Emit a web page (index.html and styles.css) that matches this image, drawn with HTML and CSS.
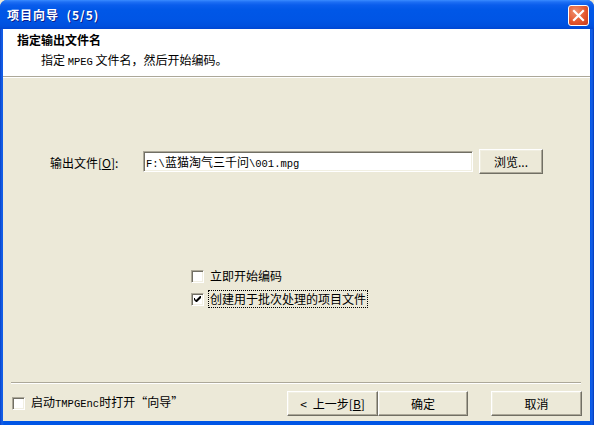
FILE: index.html
```html
<!DOCTYPE html>
<html lang="zh">
<head>
<meta charset="utf-8">
<title>项目向导</title>
<link rel="stylesheet" href="styles.css">
</head>
<body>
<div class="window">
  <div class="titlebar">
    <span class="title">项目向导&nbsp; (5/5)</span>
    <span class="close" aria-label="关闭">
      <svg width="21" height="21" viewBox="0 0 21 21">
        <path d="M6 6 L15 15 M15 6 L6 15" stroke="#fff" stroke-width="2.2" stroke-linecap="square"/>
      </svg>
    </span>
  </div>
  <div class="client">
    <div class="header">
      <div class="h-title">指定输出文件名</div>
      <div class="h-sub">指定 <span class="mono">MPEG</span> 文件名，然后开始编码。</div>
    </div>
    <div class="main">
      <div class="field-row">
        <label class="field-label">输出文件[<u>O</u>]:</label>
        <div class="input"><span class="mono">F:\</span>蓝猫淘气三千问<span class="mono">\001.mpg</span></div>
        <button class="btn browse">浏览...</button>
      </div>
      <div class="checks">
        <div class="check-row">
          <span class="box"></span>
          <span class="clabel">立即开始编码</span>
        </div>
        <div class="check-row">
          <span class="box"><svg width="7" height="7" viewBox="0 0 7 7"><path d="M0 2 L0 4 L2 6 L3 6 L7 2 L7 0 L6 0 L2 4 L1 3 L1 2 Z" fill="#000"/></svg></span>
          <span class="clabel focus">创建用于批次处理的项目文件</span>
        </div>
      </div>
    </div>
    <div class="sep"></div>
    <div class="footer">
      <div class="check-row">
        <span class="box"></span>
        <span class="clabel">启动<span class="mono">TMPGEnc</span>时打开“向导”</span>
      </div>
      <div class="buttons">
        <button class="btn back"><span class="lt">&lt;</span>上一步[<u>B</u>]</button>
        <button class="btn ok">确定</button>
        <button class="btn cancel">取消</button>
      </div>
    </div>
  </div>
</div>
</body>
</html>
```

FILE: styles.css
```css
* { box-sizing: border-box; }
html, body { margin: 0; padding: 0; }
body {
  width: 594px;
  height: 425px;
  overflow: hidden;
  background: #ECE9D8;
  font-family: "Noto Sans CJK SC", "Noto Sans", sans-serif;
  font-size: 12px;
  color: #000;
}
.mono { font-family: "Liberation Mono", monospace; font-size: 10.5px; }
.window {
  width: 594px;
  height: 425px;
  display: flex;
  flex-direction: column;
  background: linear-gradient(90deg, #0842C8 0, #1660E8 2px, #0055E5 4px, #0055E5 590px, #1660E8 592px, #0038B8 594px);
  border-radius: 7px 7px 0 0;
  padding: 0 4px 4px 3px;
}
.titlebar {
  height: 29px;
  margin: 0 -4px 0 -3px;
  padding: 0 6px 0 7px;
  display: flex;
  align-items: center;
  justify-content: space-between;
  border-radius: 7px 7px 0 0;
  background: linear-gradient(180deg, #3A8CFF 0, #1E6FF4 2px, #0A5DEC 5px, #0057E7 10px, #0055E5 20px, #0050DE 26px, #0046D2 29px);
}
.title {
  color: #fff;
  font-weight: bold;
  font-size: 12px;
  text-shadow: 1px 1px 0 #0A1E8C;
  letter-spacing: 1px;
}
.close {
  width: 21px;
  height: 21px;
  margin-right: -1px;
  border: 1px solid #fff;
  border-radius: 3px;
  background: radial-gradient(circle at 35% 30%, #F0916E 0, #E4572E 55%, #C8381A 100%);
  display: flex;
  align-items: center;
  justify-content: center;
  margin-top: 1px;
}
.close svg { display: block; margin: -1px; }
.client {
  flex: 1;
  background: #ECE9D8;
  display: flex;
  flex-direction: column;
}
.header {
  height: 48px;
  background: #fff;
  padding: 4px 0 0 14px;
  border-bottom: 1px solid #ACA899;
  box-shadow: 0 1px 0 #fff;
}
.h-title { font-weight: bold; line-height: 14px; }
.h-sub { line-height: 14px; margin-top: 6px; padding-left: 24px; }
.main {
  flex: 1;
  padding-top: 72px;
}
.field-row {
  display: flex;
  align-items: center;
  height: 25px;
}
.field-label {
  width: 93px;
  margin-left: 47px;
  padding-top: 1px;
}
.input {
  width: 330px;
  height: 21px;
  background: #fff;
  border-top: 1px solid #ACA899;
  border-left: 1px solid #ACA899;
  border-right: 1px solid #fff;
  border-bottom: 1px solid #fff;
  box-shadow: inset 1px 1px 0 #716F64, inset -1px -1px 0 #F1EFE2;
  padding: 0 2px;
  line-height: 19px;
  white-space: nowrap;
}
.btn {
  font-family: "Noto Sans CJK SC", "Noto Sans", sans-serif;
  font-size: 12px;
  color: #000;
  background: #ECE9D8;
  border-top: 1px solid #fff;
  border-left: 1px solid #fff;
  border-right: 1px solid #716F64;
  border-bottom: 1px solid #716F64;
  box-shadow: inset -1px -1px 0 #ACA899, inset 1px 1px 0 #F1EFE2;
  border-radius: 0;
  padding: 0;
  height: 25px;
}
.browse {
  width: 64px;
  margin-left: 6px;
  text-align: center;
}
.checks {
  margin-left: 188px;
  margin-top: 94px;
  display: flex;
  flex-direction: column;
  gap: 7px;
}
.check-row {
  display: flex;
  align-items: center;
  height: 16px;
}
.box {
  width: 13px;
  height: 13px;
  background: #fff;
  border-top: 1px solid #ACA899;
  border-left: 1px solid #ACA899;
  border-right: 1px solid #fff;
  border-bottom: 1px solid #fff;
  box-shadow: inset 1px 1px 0 #716F64, inset -1px -1px 0 #F1EFE2;
  display: flex;
  align-items: center;
  justify-content: center;
  flex: none;
}
.box svg { display: block; }
.clabel {
  margin-left: 4px;
  line-height: 14px;
  padding: 1px 1px;
  border: 1px solid transparent;
  white-space: nowrap;
}
.clabel.focus { border: 1px dotted #000; }
.sep {
  margin: 0 9px 0 8px;
  height: 2px;
  border-top: 1px solid #ACA899;
  border-bottom: 1px solid #fff;
}
.footer {
  display: flex;
  align-items: center;
  justify-content: space-between;
  padding: 6px 8px 5px 9px;
  height: 37px;
}
.buttons {
  display: flex;
}
.back { width: 91px; }
.lt { margin-right: 6px; }
.ok { width: 90px; }
.cancel { margin-left: 23px; width: 91px; }
u { text-decoration: underline; }
```
